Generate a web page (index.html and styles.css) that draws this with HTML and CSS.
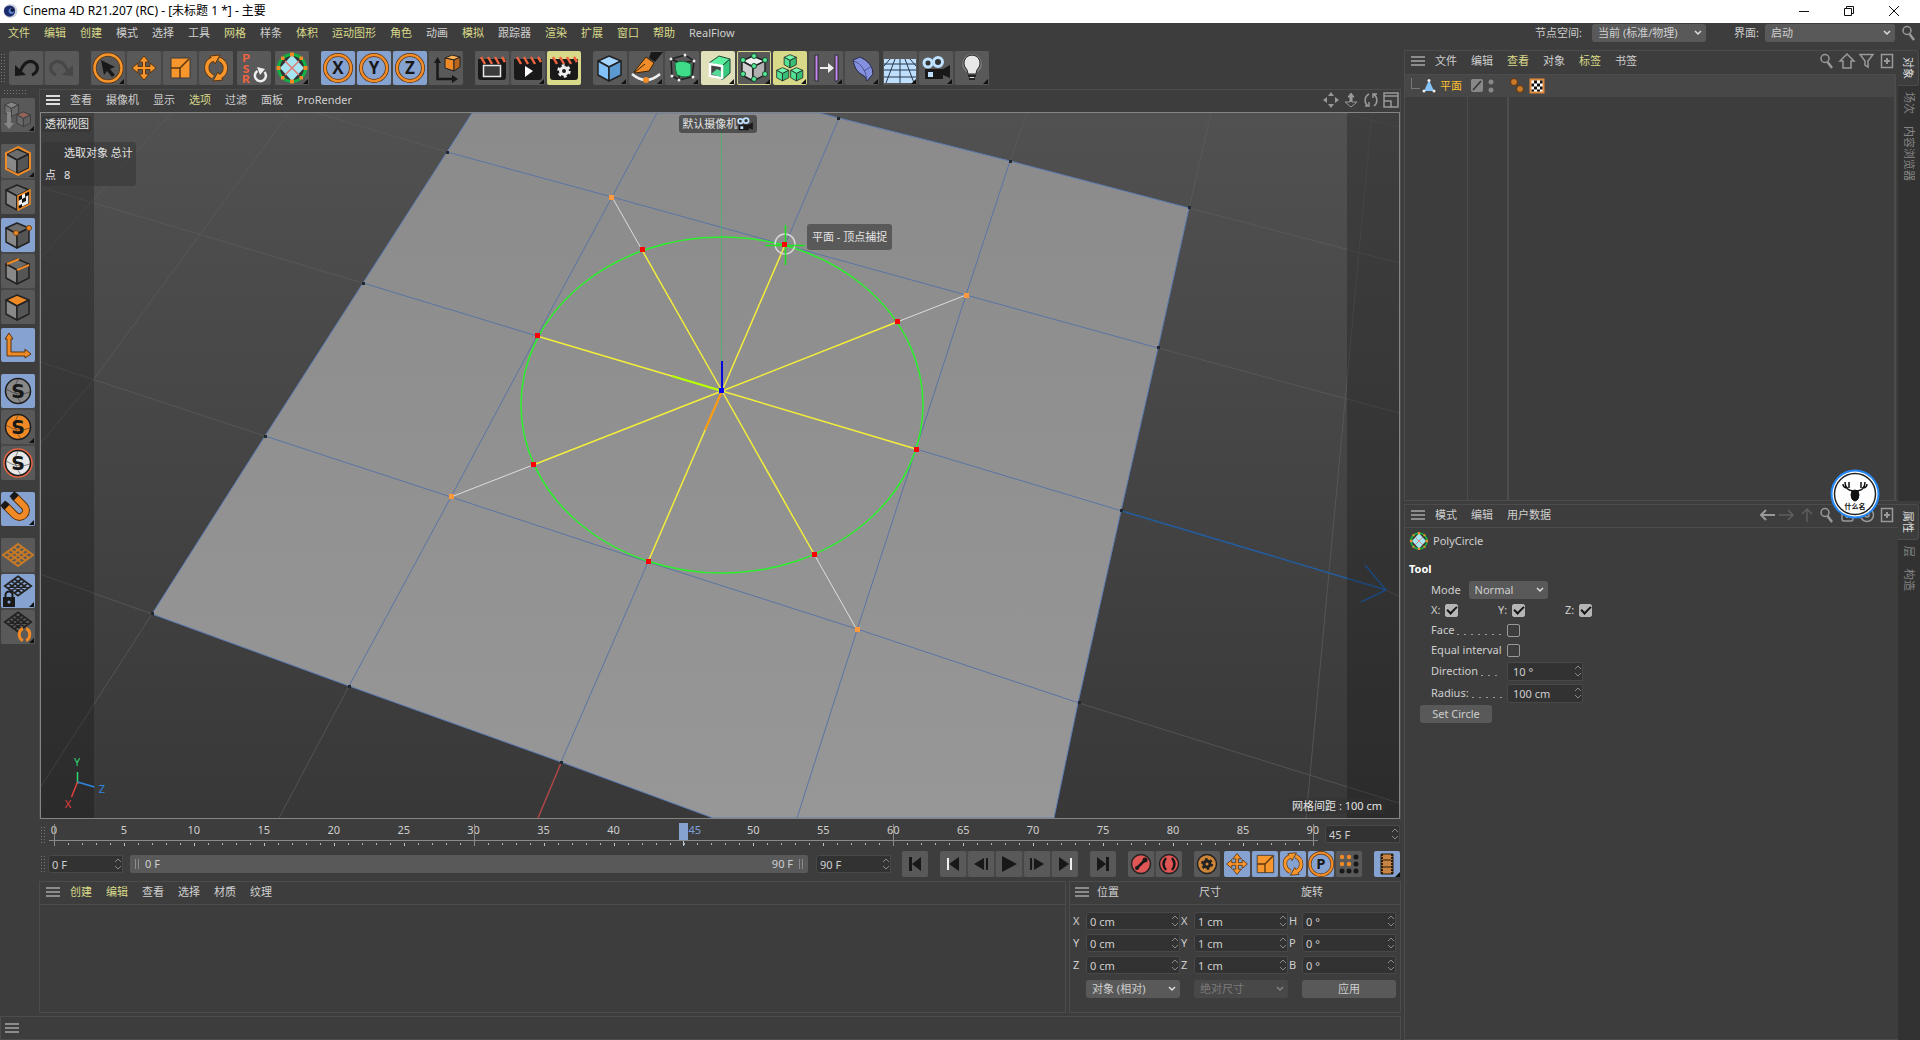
FILE: index.html
```html
<!DOCTYPE html>
<html lang="zh-CN">
<head>
<meta charset="utf-8">
<title>Cinema 4D R21.207 (RC) - [未标题 1 *] - 主要</title>
<link rel="stylesheet" href="styles.css">
</head>
<body>
<svg class="sprite" aria-hidden="true">
  <symbol id="burger" viewBox="0 0 14 10"><path d="M0 1h14M0 5h14M0 9h14" stroke="currentColor" stroke-width="2"/></symbol>
  <symbol id="search" viewBox="0 0 16 16"><circle cx="6" cy="5.500" r="4" fill="none" stroke="currentColor" stroke-width="1.500"/><path d="M8.500 9l4.500 6" stroke="currentColor" stroke-width="2.500"/></symbol>
  <symbol id="plusbox" viewBox="0 0 16 16"><path d="M2.500 1.500h11v13h-11z" fill="none" stroke="currentColor" stroke-width="1.500"/><path d="M8 5v6M5 8h6" stroke="currentColor" stroke-width="2"/></symbol>
  <symbol id="undo" viewBox="0 0 34 34"><path d="M11 21C15 10 22 8 27 13c3 4 1 9-4 11" fill="none" stroke="currentColor" stroke-width="3"/><path d="M6 14v11l11-1z" fill="currentColor"/></symbol>
  <symbol id="move" viewBox="0 0 34 34"><path d="M17 5l5 6h-3.500v4.500H23V12l6 5-6 5v-3.500h-4.500V23H22l-5 6-5-6h3.500v-4.500H11V22l-6-5 6-5v3.500h4.500V11H12z" fill="#f7962d" stroke="#5a3510"/></symbol>
  <symbol id="scale" viewBox="0 0 34 34"><path d="M8 7h19v20H8z" fill="#f7962d" stroke="#3a3a3a"/><path d="M8 17h9v10M17 17l9-9" fill="none" stroke="#5a3510" stroke-width="1.500"/></symbol>
  <symbol id="rotate" viewBox="0 0 34 34"><g fill="none" stroke="#5a3510" stroke-width="5"><path d="M14 26C5 21 6 10 15 8M20 8c9 4 8 15 0 18"/></g><path d="M11 5l10-1-5 9zM24 29l-10 1 5-9z" fill="#f7962d" stroke="#5a3510"/><g fill="none" stroke="#f7962d" stroke-width="3.500"><path d="M14 26C5 21 6 10 15 8M20 8c9 4 8 15 0 18"/></g></symbol>
  <symbol id="brackets" viewBox="0 0 34 34"><path d="M14 5C4 9 4 25 14 29M20 5c10 4 10 20 0 24" fill="none" stroke="#f08a26" stroke-width="6"/></symbol>
  <symbol id="poly" viewBox="0 0 34 34"><circle cx="17" cy="17" r="13.500" fill="#333" stroke="#11b044" stroke-width="3"/><path d="M17 4l12 13-12 13L5 17z" fill="#a5e6f0"/><path d="M10 10l14 14M24 10L10 24" stroke="#e07c78" stroke-width="1.500"/><g fill="#ef8a26"><path d="M15 1.500h4v4h-4zM15 28.500h4v4h-4zM1.500 15h4v4h-4zM28.500 15h4v4h-4zM6 5.500h3.500V9H6zM24.500 5.500H28V9h-3.500zM6 25h3.500v3.500H6zM24.500 25H28v3.500h-3.500z"/></g></symbol>
  <symbol id="ring" viewBox="0 0 34 34"><circle cx="17" cy="17" r="13" fill="none" stroke="#5a3510" stroke-width="4"/><circle cx="17" cy="17" r="13" fill="none" stroke="#f08c2a" stroke-width="2.500"/></symbol>
  <symbol id="clap" viewBox="0 0 34 34"><path d="M3 8h28v18q0 3-3 3H6q-3 0-3-3z" fill="#191919"/><path d="M6 6l4 7M13 6l4 7M20 6l4 7M27 6l3 5" stroke="#ee6440" stroke-width="2.500"/></symbol>
  <symbol id="cube" viewBox="0 0 34 34"><g stroke="#222" stroke-width="1.500" stroke-linejoin="round"><path d="M16 5l12 5-12 6-11-6z" fill="var(--a)"/><path d="M5 10l11 6v14L5 24z" fill="var(--b)"/><path d="M28 10l-12 6v14l12-6z" fill="var(--c)"/></g></symbol>
  <symbol id="cam" viewBox="0 0 34 34"><path d="M6 18h18l7-4v13l-7-3v4H6z" fill="#191919"/><circle cx="9" cy="12" r="4" fill="#333" stroke="#bfe0ff" stroke-width="3"/><circle cx="19" cy="11" r="4.500" fill="#333" stroke="#bfe0ff" stroke-width="3"/><path d="M9 21h5v5H9z" fill="#bfe0ff"/></symbol>
  <symbol id="grid" viewBox="0 0 34 34"><path d="M17 6l15 11-15 11L2 17zM13 9l15 11M9.500 11.500l15 11M6 14l15 11M21 9L6 20M24.500 11.500l-15 11M28 14L13 25" fill="none" stroke="currentColor" stroke-width="2"/></symbol>
  <symbol id="snap" viewBox="0 0 34 34"><circle cx="17" cy="17" r="12.500" fill="var(--a)" stroke="#1d1d1d" stroke-width="1.500"/><path d="M5 15q12 8 24 3M17 5q-7 12 3 24" fill="none" stroke="#222" opacity=".5"/></symbol>
  <symbol id="corner" viewBox="0 0 34 34"><path d="M33 28v5h-5z" fill="#111"/></symbol>
</svg>

<header class="titlebar">
  <svg class="app-logo" viewBox="0 0 16 16"><circle cx="8" cy="8" r="7.500" fill="#cfd3de"/><circle cx="7" cy="8" r="6" fill="#1a2c6e"/><circle cx="9" cy="8" r="3" fill="#5d84cf"/><circle cx="10" cy="7" r="2" fill="#10183c"/></svg>
  <h1>Cinema 4D R21.207 (RC) - [未标题 1 *] - 主要</h1>
  <div class="win-buttons">
    <button aria-label="最小化"><svg viewBox="0 0 12 12"><path d="M1 6.500h10" stroke="#111"/></svg></button>
    <button aria-label="还原"><svg viewBox="0 0 12 12"><path d="M1.500 3.500h7v7h-7zM3.500 3V1.500h7v7H9" fill="none" stroke="#111"/></svg></button>
    <button aria-label="关闭"><svg viewBox="0 0 12 12"><path d="M1 1l10 10M11 1L1 11" stroke="#111"/></svg></button>
  </div>
</header>

<nav class="menubar">
  <div class="menu">
    <button class="hot">文件</button><button class="hot">编辑</button><button class="hot">创建</button><button>模式</button><button>选择</button><button>工具</button><button class="hot">网格</button><button>样条</button><button class="hot">体积</button><button class="hot">运动图形</button><button class="hot">角色</button><button>动画</button><button class="hot">模拟</button><button>跟踪器</button><button class="hot">渲染</button><button class="hot">扩展</button><button class="hot">窗口</button><button class="hot">帮助</button><button>RealFlow</button>
  </div>
  <div class="menubar-right">
    <label for="nodespace">节点空间:</label>
    <select id="nodespace" class="w-node"><option>当前 (标准/物理)</option></select>
    <label for="layout" class="layout-label">界面:</label>
    <select id="layout" class="w-layout"><option>启动</option></select>
    <svg class="ic16"><use href="#search"/></svg>
  </div>
</nav>

<div class="workspace">
<main class="main">
  <div class="toolbar">
    <div class="grip grip-v"></div>
    <div class="group"><button class="tool" aria-label="撤销"><svg style="color:#181818"><use href="#undo"/></svg></button><button class="tool" aria-label="重做"><svg class="flip" style="color:#474747"><use href="#undo"/></svg></button></div>
    <div class="group sep"><button class="tool" aria-label="选择"><svg viewBox="0 0 34 34"><circle cx="17" cy="17" r="13.500" fill="none" stroke="#5a3510" stroke-width="4"/><circle cx="17" cy="17" r="13.500" fill="none" stroke="#f7962d" stroke-width="2.500"/><path d="M10 9l14 7-5 2 5 6-3 2-5-6-3 4z" fill="#191919"/><use href="#corner"/></svg></button><button class="tool" aria-label="移动"><svg><use href="#move"/></svg></button><button class="tool" aria-label="缩放"><svg><use href="#scale"/></svg></button><button class="tool" aria-label="旋转"><svg><use href="#rotate"/></svg></button></div>
    <div class="group near"><button class="tool" aria-label="重置 PSR"><svg viewBox="0 0 34 34"><text class="psr" x="9" y="11">P</text><text class="psr" x="9" y="21.500">S</text><text class="psr" x="9" y="32">R</text><path d="M20.500 20a5.500 5.500 0 1 0 7 1" fill="none" stroke="#eee" stroke-width="2.500"/><path d="M20 16l8 2-5 6z" fill="#eee"/></svg></button></div>
    <div class="group near"><button class="tool" aria-label="PolyCircle"><svg viewBox="0 0 34 34"><use href="#poly"/><use href="#corner"/></svg></button></div>
    <div class="group sep"><button class="tool on" aria-label="X 轴"><svg viewBox="0 0 34 34"><use href="#ring"/><text class="axis" x="17" y="23">X</text></svg></button><button class="tool on" aria-label="Y 轴"><svg viewBox="0 0 34 34"><use href="#ring"/><text class="axis" x="17" y="23">Y</text></svg></button><button class="tool on" aria-label="Z 轴"><svg viewBox="0 0 34 34"><use href="#ring"/><text class="axis" x="17" y="23">Z</text></svg></button><button class="tool" aria-label="坐标系统"><svg viewBox="0 0 34 34"><path d="M8.500 11v17H25" fill="none" stroke="#191919" stroke-width="2.500"/><path d="M5 12l3.500-6 3.500 6zM23 24l6 4-6 4z" fill="#191919"/><g stroke="#222" stroke-linejoin="round"><path d="M16 7l7-3 8 2-6 3z" fill="#ffb055"/><path d="M16 7l9 2v11l-9-3z" fill="#f08a26"/><path d="M25 9l6-3v10l-6 4z" fill="#b9661c"/></g></svg></button></div>
    <div class="group sep"><button class="tool" aria-label="渲染视图"><svg viewBox="0 0 34 34"><use href="#clap"/><path d="M8.500 14.500h17v11h-17z" fill="#3b3b3b" stroke="#e8e8e8" stroke-width="1.500"/></svg></button><button class="tool" aria-label="渲染"><svg viewBox="0 0 34 34"><use href="#clap"/><path d="M14 15l8 5-8 6z" fill="#fff"/><use href="#corner"/></svg></button><button class="tool hl" aria-label="渲染设置"><svg viewBox="0 0 34 34"><use href="#clap"/><circle cx="17" cy="20" r="3.500" fill="none" stroke="#eee" stroke-width="3"/><circle cx="17" cy="20" r="5.500" fill="none" stroke="#eee" stroke-width="2.500" stroke-dasharray="2.900 2.860"/></svg></button></div>
    <div class="group sep"><button class="tool" aria-label="立方体"><svg viewBox="0 0 34 34" style="--a:#a4d6ff;--b:#82c0f8;--c:#5b9ad0"><use href="#cube"/><use href="#corner"/></svg></button><button class="tool" aria-label="样条画笔"><svg viewBox="0 0 34 34"><path d="M22 1h12L26 11l-6-4z" fill="#191919"/><path d="M17 6l8 6-5 8-14 2-1-1z" fill="#f08c2a" stroke="#3a2408"/><path d="M6 21l10-8" stroke="#3a2408"/><path d="M3 23q14 12 28 0" fill="none" stroke="#eee" stroke-width="2.500"/><circle cx="17" cy="29" r="3" fill="#f08c2a"/><use href="#corner"/></svg></button><button class="tool" aria-label="细分曲面"><svg viewBox="0 0 34 34"><path d="M6 8l14-4 9 6-2 16-13 3-7-4zM6 8l9 4 14-2M15 12l-1 17" fill="none" stroke="#1e1e1e" stroke-width="1.500"/><path d="M10 12q7-4 16 1v11q-5 4-14 0-2-5-2-12z" fill="#3fdc8a" stroke="#146c3d"/><g fill="#eee"><circle cx="6" cy="8" r="1.500"/><circle cx="20" cy="4" r="1.500"/><circle cx="29" cy="10" r="1.500"/><circle cx="28" cy="26" r="1.500"/><circle cx="14" cy="29" r="1.500"/><circle cx="7" cy="25" r="1.500"/></g><use href="#corner"/></svg></button><button class="tool pale" aria-label="挤压"><svg viewBox="0 0 34 34"><g stroke="#1b4a31" stroke-linejoin="round"><path d="M8 12l10-7 11 3-8 7z" fill="#5cf0a0"/><path d="M21 15l8-7v14l-8 7z" fill="#39c87f"/></g><path d="M9 13l12 2v12l-12-2z" fill="#444" stroke="#fff" stroke-width="2.500"/><path d="M10 23l6-5 4 2v6z" fill="#56d896"/><use href="#corner"/></svg></button><button class="tool framed" aria-label="晶格"><svg viewBox="0 0 34 34"><g style="--a:#eee;--b:#cfcfcf;--c:#b0b0b0"><use href="#cube"/></g><g fill="#57e898" stroke="#17492d"><circle cx="17" cy="5" r="2.500"/><circle cx="6" cy="9" r="2.500"/><circle cx="28" cy="9" r="2.500"/><circle cx="17" cy="15" r="2.500"/><circle cx="6" cy="23" r="2.500"/><circle cx="28" cy="23" r="2.500"/><circle cx="17" cy="28" r="2.500"/></g><use href="#corner"/></svg></button><button class="tool hl" aria-label="克隆"><svg viewBox="0 0 34 34" style="--a:#6df5ac;--b:#52e296;--c:#36bd76"><use href="#cube" x="8" y="1" width="19" height="18"/><use href="#cube" x="1" y="14" width="18" height="18"/><use href="#cube" x="15" y="14" width="18" height="18"/><use href="#corner"/></svg></button><button class="tool" aria-label="场"><svg viewBox="0 0 34 34"><path d="M6 4h3v26H6zM26 4h3v26h-3z" fill="#c486f5" stroke="#2c2c2c"/><path d="M11 16h8v-4l6 5-6 5v-4h-8z" fill="#eee"/><use href="#corner"/></svg></button><button class="tool" aria-label="变形器"><svg viewBox="0 0 34 34"><path d="M8 9l7-3q13 6 13 17l-6 7q-1-5-6-7-6-3-8-14z" fill="#8591de" stroke="#262a4a"/><path d="M9 10q11 4 13 19M19 20l8-5" fill="none" stroke="#4c5596"/><use href="#corner"/></svg></button></div>
    <div class="group near"><button class="tool" aria-label="地面"><svg viewBox="0 0 34 34"><path d="M1 8h32v24H1z" fill="#bfdfff"/><path d="M1 13h32M1 19h32M1 26h32M17 8v24M12 8L3 32M22 8l9 24M7 8L1 15M27 8l6 7" stroke="#27394b" stroke-width="1"/><use href="#corner"/></svg></button><button class="tool" aria-label="摄像机"><svg viewBox="0 0 34 34"><use href="#cam"/><use href="#corner"/></svg></button><button class="tool" aria-label="灯光"><svg viewBox="0 0 34 34"><circle cx="17" cy="13" r="10" fill="#999" opacity=".5"/><path d="M13 23q0-4-3-7a8 8 0 1 1 14 0q-3 3-3 7z" fill="#e8e8e8" stroke="#2b2b2b"/><path d="M13 25h8M14 28h6" stroke="#222" stroke-width="2"/><path d="M15 26.500h4" stroke="#ddd"/><use href="#corner"/></svg></button></div>
  </div>

  <div class="stage">
    <aside class="sidebar">
      <div class="grip grip-h"></div>
      <div class="vgroup"><button class="tool" aria-label="转为可编辑"><svg viewBox="0 0 34 34"><g opacity=".55"><g style="--a:#aaa;--b:#888;--c:#777"><use href="#cube" x="1" y="1" width="20" height="20"/></g><g style="--a:#c4705a;--b:#777;--c:#666"><use href="#cube" x="13" y="11" width="20" height="20"/></g><path d="M6 14h4v11h3l-5 6-5-6h3z" fill="#aaa"/></g><use href="#corner"/></svg></button></div>
      <div class="vgroup far"><button class="tool" aria-label="模型"><svg viewBox="0 0 34 34" style="--a:#6c6c6c;--b:#888;--c:#555"><use href="#cube"/><path d="M17 3l12 6v16l-12 6-12-6V9z" fill="none" stroke="#f08a26" stroke-width="2"/><use href="#corner"/></svg></button><button class="tool" aria-label="纹理"><svg viewBox="0 0 34 34" style="--a:#6c6c6c;--b:#888;--c:#eee"><use href="#cube"/><path d="M17 16l4-2v5l-4 2zM24 13l4-2v4l-4 2zM21 19l4-2v4l-4 2zM17 26l4-2v4l-4 1z" fill="#111"/><path d="M17 16l12-6v14l-12 6z" fill="none" stroke="#f08a26" stroke-width="1.500"/></svg></button></div>
      <div class="vgroup"><button class="tool on" aria-label="点"><svg viewBox="0 0 34 34" style="--a:#6c6c6c;--b:#888;--c:#555"><use href="#cube"/><g fill="#f08a26" stroke="#7a4410"><circle cx="15" cy="15" r="2.500"/><circle cx="28" cy="10" r="2.500"/></g></svg></button><button class="tool" aria-label="边"><svg viewBox="0 0 34 34" style="--a:#6c6c6c;--b:#888;--c:#555"><use href="#cube"/><path d="M6 10l12-5M16 16l12-5" stroke="#f08a26" stroke-width="2"/></svg></button><button class="tool" aria-label="多边形"><svg viewBox="0 0 34 34" style="--a:#f08a26;--b:#888;--c:#555"><use href="#cube"/></svg></button></div>
      <div class="vgroup"><button class="tool on" aria-label="启用轴心"><svg viewBox="0 0 34 34"><path d="M8 5l4 6h-2v13h14v-3l6 5-6 4v-2H6V11H4z" fill="#f08a26" stroke="#5a3510"/></svg></button></div>
      <div class="vgroup far"><button class="tool on" aria-label="视窗独显关闭"><svg viewBox="0 0 34 34" style="--a:#888"><use href="#snap"/><text class="solo" x="17" y="24">S</text></svg></button><button class="tool" aria-label="视窗独显单一"><svg viewBox="0 0 34 34" style="--a:#f08a26"><use href="#snap"/><text class="solo" x="17" y="24">S</text><use href="#corner"/></svg></button><button class="tool" aria-label="视窗独显层级"><svg viewBox="0 0 34 34" style="--a:#e8e8e8"><circle cx="17" cy="17" r="14" fill="none" stroke="#ee6440" stroke-width="1.500"/><use href="#snap"/><text class="solo" x="17" y="24">S</text></svg></button></div>
      <div class="vgroup far"><button class="tool on" aria-label="启用捕捉"><svg viewBox="0 0 34 34"><g transform="rotate(-45 17 17)"><path d="M7 5v14a10 10 0 0 0 20 0V5h-7v14a3 3 0 0 1-6 0V5z" fill="#f08a26" stroke="#5a3510"/><path d="M7 2h7v6H7zM20 2h7v6h-7z" fill="#191919"/></g><use href="#corner"/></svg></button></div>
      <div class="vgroup far"><button class="tool" aria-label="工作平面"><svg style="color:#c97a24"><use href="#grid"/></svg></button><button class="tool on" aria-label="锁定工作平面"><svg viewBox="0 0 34 34" style="color:#222"><use href="#grid" x="2" y="-3" width="30" height="30"/><path d="M2 23h12v10H2z" fill="#191919"/><path d="M4.500 23v-2a3.500 3.500 0 0 1 7 0v2" fill="none" stroke="#191919" stroke-width="2"/><circle cx="8" cy="28" r="1.500" fill="#86a2d0"/><use href="#corner"/></svg></button><button class="tool" aria-label="平直工作平面"><svg viewBox="0 0 34 34" style="color:#222"><use href="#grid" x="2" y="-3" width="30" height="30"/><use href="#brackets" x="15" y="16" width="17" height="17"/><use href="#corner"/></svg></button></div>
    </aside>

    <div class="center">
      <section class="view">
        <div class="panel-head">
          <svg class="burger light"><use href="#burger"/></svg>
          <div class="menu"><button>查看</button><button>摄像机</button><button>显示</button><button class="hot">选项</button><button>过滤</button><button>面板</button><button>ProRender</button></div>
          <div class="head-icons">
            <svg class="ic16" viewBox="0 0 16 16"><path d="M8 0l3 4H5zM8 16l3-4H5zM0 8l4-3v6zM16 8l-4-3v6zM6 8h4M8 6v4" fill="#999"/></svg>
            <svg class="ic16" viewBox="0 0 16 16"><path d="M8 1l3 4H9v5h5l-6 5-6-5h5V5H5z" fill="#3d3d3d" stroke="#999"/><path d="M8 1l3 4H9v5H7V5H5z" fill="#999"/></svg>
            <svg class="ic16" viewBox="0 0 16 16"><path d="M6 2C1 5 1 11 5 14M10 2c5 3 5 9 1 12M2 14h4v-4M14 2h-4v4" fill="none" stroke="#999" stroke-width="1.500"/></svg>
            <svg class="ic16" viewBox="0 0 16 16"><path d="M1 1h14v14H1zM1 4h14M1 9h7v6" fill="none" stroke="#999" stroke-width="1.500"/></svg>
          </div>
        </div>
        <div class="viewport">
          <svg class="scene" viewBox="41 113 1358 705" preserveAspectRatio="xMidYMid slice">
            <defs>
              <linearGradient id="bg" x1="0" y1="0" x2="0" y2="1"><stop offset="0" stop-color="#515151"/><stop offset="1" stop-color="#383838"/></linearGradient>
              <linearGradient id="pl" x1="0" y1="0" x2="0" y2="1"><stop offset="0" stop-color="#8b8b8b"/><stop offset="1" stop-color="#979797"/></linearGradient>
            </defs>
            <path d="M41 113h1358v705H41z" fill="url(#bg)"/>
            <g fill="none" stroke="#5c5c5c">
              <path d="M40 187l323 96M40 362l225 74M40 574l112 40L40 788M300 108l147 44M349 686l-70 132M289 113L94 379 40 444M171 113L40 259M1010 161l17-48M1189 208l22-95M1189 208l210 55M1158 348l241 65M1386 590l13 6M1079 703l320 100M1372 113l-66 705M1342 113l57 14" opacity=".75"/>
            </g>
            <path d="M472 113h348l19 5 171 43 179 47-31 140-37 163-43 192-24 115H713L561 762 349 686 152 614 265 436l98-153 84-131z" fill="url(#pl)" stroke="#5b7db4" stroke-width="1"/>
            <g fill="none" stroke="#5a74a5">
              <path d="M447 152l165 45 173 48 181 50 192 53M363 283l174 53M916 449l206 62M265 436l186 61 197 65 209 67 222 74"/>
              <path d="M657 113l-45 84-75 139-86 161-102 189M839 118l-54 127M648 562l-87 200M1010 161l-44 134-50 154-59 181-60 188"/>
            </g>
            <path d="M1122 511l264 79M1365 565l21 25-25 12" fill="none" stroke="#245c9e" stroke-width="1.500"/>
            <path d="M561 763l-23 55" stroke="#b04646" stroke-width="1.500"/>
            <path d="M721.500 113v278" stroke="#41b865" opacity=".7"/>
            <g stroke="#dedede"><path d="M612 197l30 53M966 295l-69 27M451 497l82-32M857 630l-43-76"/></g>
            <ellipse cx="722" cy="405" rx="201" ry="168" fill="none" stroke="#2bf02b" stroke-width="1.500"/>
            <path d="M722 391L642 250M722 391l63-146M722 391l175-69M722 391l194 58M722 391l92 163M722 391l-74 171M722 391l-189 74M722 391l-185-55" stroke="#f4ee3a" stroke-width="1.500"/>
            <path d="M722 391l-50-15" stroke="#b4ff00" stroke-width="2"/>
            <path d="M722 391l-17 39" stroke="#ff9a10" stroke-width="2"/>
            <path d="M722 391v-30" stroke="#0a0ad8" stroke-width="2"/>
            <path d="M719 388h5v5h-5z" fill="#0000ff"/>
            <circle cx="785" cy="244" r="10" fill="none" stroke="#d8d8d8" stroke-width="1.500"/>
            <path d="M765 245.500h40M785.500 225v40" stroke="#1fe41f" stroke-width="1.500"/>
            <path d="M640 247h5v5h-5zM782 242h5v5h-5zM895 319h5v5h-5zM914 447h5v5h-5zM812 552h5v5h-5zM646 559h5v5h-5zM531 462h5v5h-5zM535 333h5v5h-5z" fill="#ff0000"/>
            <path d="M609 195h5v5h-5zM964 293h5v5h-5zM449 494h5v5h-5zM855 627h5v5h-5z" fill="#ff9a3c"/>
            <path d="M446 151h3v3h-3zM362 282h3v3h-3zM264 435h3v3h-3zM151 612h3v3h-3zM348 685h3v3h-3zM560 761h3v3h-3zM837 117h3v3h-3zM1009 160h3v3h-3zM1188 206h3v3h-3zM1157 346h3v3h-3zM1120 509h3v3h-3zM1078 701h3v3h-3z" fill="#222831"/>
            <path d="M41 113h53v705H41zM1347 113h52v705h-52z" fill="#000" opacity=".22"/>
            <path d="M77.500 784v-12" stroke="#2fd673" stroke-width="1.500"/><path d="M77.500 782l17 5" stroke="#2e86e0" stroke-width="1.500"/><path d="M77.500 782l-6 15" stroke="#e04040" stroke-width="1.500"/>
            <text class="axlabel" x="77" y="766" fill="#2fd673">Y</text><text class="axlabel" x="102" y="793" fill="#2e86e0">Z</text><text class="axlabel" x="68" y="808" fill="#e04040">X</text>
          </svg>
          <span class="hud hud-name">透视视图</span>
          <table class="hud hud-stats"><tr><th></th><td>选取对象 总计</td></tr><tr><th>点</th><td>8</td></tr></table>
          <span class="hud hud-cam">默认摄像机<svg viewBox="3 5 30 24"><use href="#cam" width="34" height="34"/></svg></span>
          <span class="hud hud-tip">平面 - 顶点捕捉</span>
          <span class="hud hud-grid">网格间距 : 100 cm</span>
        </div>
      </section>

      <div class="timeline">
        <div class="grip grip-v small"></div>
        <div class="ruler">
          <div class="labels"><span>0</span><span>5</span><span>10</span><span>15</span><span>20</span><span>25</span><span>30</span><span>35</span><span>40</span><span class="current">45</span><span>50</span><span>55</span><span>60</span><span>65</span><span>70</span><span>75</span><span>80</span><span>85</span><span>90</span></div>
          <div class="ticks"></div>
          <div class="marks"><i></i><i></i><i></i><i></i></div>
          <div class="playhead"></div>
        </div>
        <input class="num w-frame" aria-label="当前帧" value="45 F">
      </div>

      <div class="transport">
        <div class="grip grip-v small"></div>
        <input class="num w-frame" aria-label="起始帧" value="0 F">
        <div class="range"><i></i><span>0 F</span><span class="end">90 F</span><i></i></div>
        <input class="num w-frame" aria-label="结束帧" value="90 F">
        <div class="tgroup t1"><button class="tb" aria-label="转到开始"><svg viewBox="0 0 26 26"><path d="M7 6h3v14H7zM19 6v14l-9-7z" fill="#181818"/></svg></button></div>
        <div class="tgroup t2"><button class="tb" aria-label="上一关键帧"><svg viewBox="0 0 26 26"><path d="M7 7h2v12H7z" fill="#eee"/><path d="M9 13l10-7v14z" fill="#181818"/></svg></button><button class="tb" aria-label="上一帧"><svg viewBox="0 0 26 26"><path d="M6 13l10-6v12zM18 7h2v12h-2z" fill="#181818"/></svg></button><button class="tb" aria-label="播放"><svg viewBox="0 0 26 26"><path d="M6 5l15 8-15 8z" fill="#181818"/></svg></button><button class="tb" aria-label="下一帧"><svg viewBox="0 0 26 26"><path d="M20 13L10 7v12zM6 7h2v12H6z" fill="#181818"/></svg></button><button class="tb" aria-label="下一关键帧"><svg viewBox="0 0 26 26"><path d="M17 13L7 6v14z" fill="#181818"/><path d="M18 7h2v12h-2z" fill="#eee"/></svg></button></div>
        <div class="tgroup t2"><button class="tb" aria-label="转到结束"><svg viewBox="0 0 26 26"><path d="M16 6h3v14h-3zM7 6v14l9-7z" fill="#181818"/></svg></button></div>
        <div class="tgroup t2"><button class="tb" aria-label="记录关键帧"><svg viewBox="0 0 26 26"><circle cx="13" cy="13" r="9.500" fill="#e25555" stroke="#222" stroke-width="1.500"/><path d="M9 17l8-8" stroke="#181818" stroke-width="2.500"/><circle cx="17" cy="9" r="2.500" fill="#181818"/><circle cx="9" cy="17" r="2" fill="#181818"/></svg></button><button class="tb" aria-label="自动关键帧"><svg viewBox="0 0 26 26"><circle cx="13" cy="13" r="9.500" fill="#e25555" stroke="#222" stroke-width="1.500"/><path d="M10 7q-5 6 0 12M16 7q5 6 0 12" fill="none" stroke="#181818" stroke-width="2.500"/></svg></button></div>
        <div class="tgroup t2"><button class="tb" aria-label="关键帧选集"><svg viewBox="0 0 26 26"><circle cx="13" cy="13" r="9.500" fill="#d08638" stroke="#222" stroke-width="1.500"/><circle cx="13" cy="13" r="3" fill="none" stroke="#222" stroke-width="3"/><circle cx="13" cy="13" r="5" fill="none" stroke="#222" stroke-width="2" stroke-dasharray="2.600 2.630"/></svg></button></div>
        <div class="tgroup t3"><button class="tb on" aria-label="位置"><svg viewBox="2 2 30 30"><use href="#move" width="34" height="34"/></svg></button><button class="tb on" aria-label="缩放"><svg viewBox="2 2 30 30"><use href="#scale" width="34" height="34"/></svg></button><button class="tb on" aria-label="旋转"><svg viewBox="2 2 30 30"><use href="#rotate" width="34" height="34"/></svg></button><button class="tb on" aria-label="参数"><svg viewBox="2 2 30 30"><use href="#ring" width="34" height="34"/><text class="axis" x="17" y="23">P</text></svg></button><button class="tb" aria-label="点级别动画"><svg viewBox="0 0 26 26"><g fill="#f08a26"><circle cx="6" cy="6" r="2.200"/><circle cx="13" cy="6" r="2.200"/><circle cx="6" cy="13" r="2.200"/><circle cx="13" cy="13" r="2.200"/></g><g fill="#181818"><circle cx="20" cy="6" r="2.500"/><circle cx="20" cy="13" r="2.500"/><circle cx="6" cy="20" r="2.500"/><circle cx="13" cy="20" r="2.500"/><circle cx="20" cy="20" r="2.500"/></g></svg></button></div>
        <div class="tgroup t2"><button class="tb on" aria-label="时间线"><svg viewBox="0 0 26 26"><path d="M7 3h12v20H7z" fill="#c98443" stroke="#2a1a08"/><path d="M8 3v20M18 3v20" stroke="#2a1a08" stroke-width="2" stroke-dasharray="2 1"/><path d="M9 9h8M9 16h8" stroke="#2a1a08"/><path d="M26 21v5h-5z" fill="#111"/></svg></button></div>
      </div>

      <div class="lower">
        <section class="materials">
          <div class="panel-head short"><svg class="burger"><use href="#burger"/></svg><div class="menu"><button class="hot">创建</button><button class="hot">编辑</button><button>查看</button><button>选择</button><button>材质</button><button>纹理</button></div></div>
        </section>
        <section class="coords">
          <div class="panel-head short"><svg class="burger"><use href="#burger"/></svg><div class="coord-titles"><span>位置</span><span>尺寸</span><span>旋转</span></div></div>
          <div class="coord-grid">
            <label for="px">X</label><input class="num" id="px" value="0 cm"><label for="sx">X</label><input class="num" id="sx" value="1 cm"><label for="rh">H</label><input class="num" id="rh" value="0 °">
            <label for="py">Y</label><input class="num" id="py" value="0 cm"><label for="sy">Y</label><input class="num" id="sy" value="1 cm"><label for="rp">P</label><input class="num" id="rp" value="0 °">
            <label for="pz">Z</label><input class="num" id="pz" value="0 cm"><label for="sz">Z</label><input class="num" id="sz" value="1 cm"><label for="rb">B</label><input class="num" id="rb" value="0 °">
            <select class="c2" aria-label="坐标模式"><option>对象 (相对)</option></select><select class="c4" aria-label="尺寸模式" disabled><option>绝对尺寸</option></select><button class="btn c6">应用</button>
          </div>
        </section>
      </div>
    </div>
  </div>
  <footer class="status"><svg class="burger"><use href="#burger"/></svg></footer>
</main>

<aside class="right">
  <div class="dock objects-dock">
    <section class="panel">
      <div class="panel-head"><svg class="burger"><use href="#burger"/></svg><div class="menu"><button>文件</button><button>编辑</button><button class="hot">查看</button><button>对象</button><button class="hot">标签</button><button>书签</button></div>
        <div class="head-icons"><svg class="ic16"><use href="#search"/></svg><svg class="ic16" viewBox="0 0 16 16"><path d="M8 1l7 7h-3v7H4V8H1z" fill="none" stroke="#999" stroke-width="1.500"/></svg><svg class="ic16" viewBox="0 0 16 16"><path d="M1 1.500h13L9 8v6l-3-2V8z" fill="none" stroke="#999" stroke-width="1.500"/></svg><svg class="ic16"><use href="#plusbox"/></svg></div></div>
      <div class="tree">
        <div class="tree-row">
          <div class="tree-name"><i class="branch"></i><svg class="ic16" viewBox="0 0 16 16"><path d="M8 2l5 11H3z" fill="#86c4fa"/><g fill="#eee"><circle cx="8" cy="2.500" r="1.500"/><circle cx="3" cy="13" r="1.500"/><circle cx="13" cy="13" r="1.500"/></g></svg><span>平面</span></div>
          <div class="tree-flags"><svg viewBox="0 0 24 14"><rect width="12" height="13" rx="2" fill="#888"/><path d="M2 11l8-9" stroke="#333" stroke-width="1.500"/><circle cx="20" cy="3" r="2.500" fill="#888"/><circle cx="20" cy="11" r="2.500" fill="#888"/></svg></div>
          <div class="tree-tags"><svg viewBox="0 0 36 18"><circle cx="5" cy="5" r="3.500" fill="#c9792a" stroke="#5c330e"/><circle cx="11" cy="12" r="3.500" fill="#c9792a" stroke="#5c330e"/><path d="M21.500 2.500h13v13h-13z" fill="#fff" stroke="#e08a3c" stroke-width="2"/><path d="M25 3.500h3v3h-3zM31 3.500h2.500v3H31zM22.500 6.500H25v3h-2.500zM28 6.500h3v3h-3zM25 9.500h3v3h-3zM31 9.500h2.500v3H31zM22.500 12.500H25v2h-2.500zM28 12.500h3v2h-3z" fill="#111"/></svg></div>
        </div>
        <div class="tree-body"><div></div><div></div><div></div></div>
      </div>
    </section>
    <nav class="tabs"><button class="active">对象</button><button>场次</button><button>内容浏览器</button></nav>
  </div>
  <div class="dock attr-dock">
    <section class="panel">
      <div class="panel-head short"><svg class="burger"><use href="#burger"/></svg><div class="menu"><button>模式</button><button>编辑</button><button>用户数据</button></div>
        <div class="head-icons"><svg class="ic16" viewBox="0 0 16 16"><path d="M16 8H2M7 3L2 8l5 5" fill="none" stroke="#999" stroke-width="2"/></svg><svg class="ic16" viewBox="0 0 16 16"><path d="M0 8h14M9 3l5 5-5 5" fill="none" stroke="#5e5e5e" stroke-width="1.500"/></svg><svg class="ic16" viewBox="0 0 16 16"><path d="M8 15V2M3 7l5-5 5 5" fill="none" stroke="#5e5e5e" stroke-width="1.500"/></svg><svg class="ic16"><use href="#search"/></svg><svg class="ic16" viewBox="0 0 16 16"><rect x="3" y="2" width="11" height="12" rx="2" fill="none" stroke="#999" stroke-width="1.500"/><path d="M8 6v5M6 9h5" stroke="#999" stroke-width="2"/></svg><svg class="ic16" viewBox="0 0 16 16"><circle cx="8" cy="8" r="6.500" fill="none" stroke="#999" stroke-width="1.500"/><circle cx="8" cy="8" r="2" fill="none" stroke="#999" stroke-width="1.500"/></svg><svg class="ic16"><use href="#plusbox"/></svg></div></div>
      <div class="attr">
        <div class="attr-title"><svg><use href="#poly"/></svg><span>PolyCircle</span></div>
        <h2>Tool</h2>
        <form class="form">
          <div class="row"><label for="mode">Mode</label><select id="mode" class="w-mode"><option>Normal</option></select></div>
          <div class="row axes"><label>X: <input type="checkbox" checked></label><label>Y: <input type="checkbox" checked></label><label>Z: <input type="checkbox" checked></label></div>
          <div class="row"><label class="dots" for="face"><span>Face</span></label><input type="checkbox" id="face"></div>
          <div class="row"><label class="dots" for="equal"><span>Equal interval</span></label><input type="checkbox" id="equal"></div>
          <div class="row tall"><label class="dots" for="dir"><span>Direction</span></label><input class="num w-attr" id="dir" value="10 °"></div>
          <div class="row tall"><label class="dots" for="radius"><span>Radius:</span></label><input class="num w-attr" id="radius" value="100 cm"></div>
          <button type="button" class="btn set">Set Circle</button>
        </form>
      </div>
    </section>
    <nav class="tabs"><button class="active">属性</button><button>层</button><button>构造</button></nav>
    <svg class="badge" viewBox="0 0 50 50"><circle cx="25" cy="25" r="24.500" fill="#2487f5"/><circle cx="25" cy="25" r="22.500" fill="#fff"/><circle cx="25" cy="25" r="20.500" fill="#fff" stroke="#222" stroke-width="1.500"/><path d="M22 22q3-2 6 0 2 4 0 8-3 4-6 0-2-4 0-8z" fill="#111" stroke="#111"/><path d="M23 22q-8-1-8-9M18 19q-5 0-5-4M19 19v-6M27 22q8-1 8-9M32 19q5 0 5-4M31 19v-6" fill="none" stroke="#111" stroke-width="1.500"/><text x="25" y="40">什么名</text></svg>
  </div>
</aside>
</div>
</body>
</html>
```
FILE: styles.css
```css
* { box-sizing: border-box; }
:root {
  --bg: #3d3d3d;
  --line: #4c4c4c;
  --btn: #595959;
  --on: #86a2d0;
  --hot: #d9d98a;
  --text: #cfcfcf;
}
body {
  margin: 0;
  height: 100vh;
  display: flex;
  flex-direction: column;
  background: var(--bg);
  color: var(--text);
  font: 11px/16px "Noto Sans", "Noto Sans CJK SC", sans-serif;
  overflow: hidden;
}
button, input, select { font: inherit; color: inherit; margin: 0; }
button { border: 0; padding: 0; background: none; white-space: nowrap; }
svg { display: block; overflow: visible; }
.sprite { position: absolute; width: 0; height: 0; }
.ic16 { width: 16px; height: 16px; color: #999; flex: none; }

/* Title bar */
.titlebar { flex: none; height: 23px; background: #fff; color: #000; display: flex; align-items: center; padding: 0 4px 2px 3px; }
.app-logo { width: 15px; height: 16px; }
.titlebar h1 { margin: 0 auto 0 5px; font-size: 12px; font-weight: 400; }
.win-buttons { display: flex; }
.win-buttons button { width: 45px; height: 20px; display: grid; place-items: center; }
.win-buttons svg { width: 12px; height: 12px; }

/* Menus */
.menubar { flex: none; height: 27px; padding: 0 3px 7px 8px; display: flex; align-items: center; justify-content: space-between; }
.menu { display: flex; gap: 14px; }
.hot { color: var(--hot); }
.menubar-right { display: flex; align-items: center; gap: 6px; }
.menubar-right label { margin-right: 4px; }
.menubar-right .layout-label { margin: 0 0 0 22px; }

select {
  appearance: none;
  height: 18px;
  padding: 0 16px 0 6px;
  border: 0;
  border-radius: 3px;
  background: var(--btn) url("data:image/svg+xml,%3Csvg xmlns='http://www.w3.org/2000/svg' width='8' height='6'%3E%3Cpath d='M1 1l3 3 3-3' fill='none' stroke='%23ddd' stroke-width='1.500'/%3E%3C/svg%3E") no-repeat right 4px center;
}
select:disabled { opacity: 1; color: #7a7a7a; background-color: #484848; background-image: url("data:image/svg+xml,%3Csvg xmlns='http://www.w3.org/2000/svg' width='8' height='6'%3E%3Cpath d='M1 1l3 3 3-3' fill='none' stroke='%23808080' stroke-width='1.500'/%3E%3C/svg%3E"); }
.w-node { width: 114px; }
.w-layout { width: 130px; }
.w-mode { width: 79px; }

.num {
  width: 100%;
  height: 18px;
  padding: 0 14px 0 3px;
  border: 1px solid #484848;
  border-radius: 3px 0 0 3px;
  background: #323232 url("data:image/svg+xml,%3Csvg xmlns='http://www.w3.org/2000/svg' width='8' height='12'%3E%3Cpath d='M1 4l3-3 3 3M1 8l3 3 3-3' fill='none' stroke='%23888'/%3E%3C/svg%3E") no-repeat right 0 center;
}
.num.w-frame { width: 75px; flex: none; }
.num.w-attr { width: 76px; height: 19px; padding-left: 5px; }
.btn { height: 18px; background: var(--btn); border-radius: 3px; }

/* Main frame */
.workspace { flex: 1; min-height: 0; display: flex; }
.main { flex: 1; min-width: 0; display: flex; flex-direction: column; }
.toolbar { flex: none; height: 39px; display: flex; align-items: flex-start; padding-top: 1px; }
.group { display: flex; gap: 2px; margin-left: 4px; background: #484848; border-radius: 3px; }
.group.sep { margin-left: 12px; }
.tool { width: 34px; height: 34px; background: var(--btn); border-radius: 2px; flex: none; }
.tool > svg { width: 34px; height: 34px; }
.tool.on, .tb.on { background: var(--on); }
.tool.hl { background: #d9d98a; }
.tool.pale { background: #dfdfb9; }
.tool.framed { box-shadow: inset 0 0 0 1px #d9d98a; }
.flip { transform: scaleX(-1); }
.psr { font: 900 12px Lato, sans-serif; fill: #ee6440; text-anchor: middle; }
.axis { font: 700 17px "Open Sans", sans-serif; fill: #181818; text-anchor: middle; }
.solo { font: 900 19px "DejaVu Sans", sans-serif; fill: #181818; text-anchor: middle; }
.grip { background: radial-gradient(circle, #777 0 1px, transparent 1px) 0 0 / 3px 3px; flex: none; }
.grip-v { width: 5px; height: 30px; margin-top: 2px; }
.grip-v.small { width: 5px; height: 18px; margin: 0; }
.grip-h { width: 24px; height: 5px; margin: 0 0 4px 2px; }

.stage { flex: 1; min-height: 0; display: flex; }
.sidebar { width: 39px; flex: none; padding-left: 1px; }
.vgroup { width: 34px; display: flex; flex-direction: column; gap: 2px; background: #484848; margin-bottom: 4px; }
.vgroup.far { margin-top: 12px; }
.center { flex: 1; min-width: 0; display: flex; flex-direction: column; }

.view { flex: 1; min-height: 0; display: flex; flex-direction: column; border: 1px solid var(--line); border-width: 1px 1px 0; margin-right: 3px; }
.panel-head { flex: none; height: 22px; padding: 0 3px 2px 6px; display: flex; align-items: center; gap: 10px; }
.burger { width: 14px; height: 10px; color: #8c8c8c; flex: none; }
.burger.light { color: #ddd; }
.head-icons { margin-left: auto; display: flex; gap: 4px; }
.view .head-icons { margin-right: -2px; }
.viewport { flex: 1; min-height: 0; position: relative; overflow: hidden; border: 1px solid #858585; }
.scene { width: 100%; height: 100%; }
.axlabel { font-size: 11px; text-anchor: middle; }
.hud { position: absolute; background: rgba(50, 50, 50, .5); border-radius: 3px; color: #e4e4e4; padding: 0 3px; }
.hud-name { left: 1px; top: 3px; }
.hud-stats { left: 1px; top: 29px; width: 94px; border-spacing: 0; line-height: 22px; }
.hud-stats th, .hud-stats td { padding: 0; font-weight: 400; text-align: left; white-space: nowrap; }
.hud-stats th { width: 19px; }
.hud-cam { left: 47%; top: 2px; display: flex; align-items: center; height: 18px; padding: 0 3px; background: rgba(60, 60, 60, .75); }
.hud-cam svg { width: 17px; height: 14px; overflow: hidden; }
.hud-tip { left: 56.400%; top: 15.800%; padding: 5px; background: rgba(80, 80, 80, .85); }
.hud-grid { right: 14px; bottom: 4px; }

/* Timeline */
.timeline { flex: none; height: 32px; display: flex; align-items: center; padding: 0 4px 0 1px; }
.ruler { flex: 1; position: relative; height: 32px; margin: 0 7px 0 4px; padding: 3px 5px 0; }
.labels { display: flex; justify-content: space-between; height: 18px; }
.labels span { width: 0; display: flex; justify-content: center; }
.labels .current { color: #7f9fdc; justify-content: flex-start; text-indent: 5px; }
.ruler::after { content: ""; position: absolute; left: 0; right: 0; top: 21px; height: 1px; background: #8a8a8a; }
.ticks {
  height: 6px;
  margin: 3px -1px 0 0;
  background:
    repeating-linear-gradient(90deg, #c4c4c4 0 1px, transparent 1px calc((100% - 1px) / 18)) 0 0 / 100% 3px no-repeat,
    repeating-linear-gradient(90deg, #b4b4b4 0 1px, transparent 1px calc((100% - 1px) / 90)) 0 0 / 100% 2px no-repeat;
}
.marks { position: absolute; left: 5px; right: 4px; top: 5px; display: flex; justify-content: space-between; }
.marks i { width: 1px; height: 22px; background: #8a8a8a; }
.playhead { position: absolute; left: 50%; top: 4px; width: 9px; height: 17px; margin-left: -5px; background: var(--on); }
.playhead::after { content: ""; position: absolute; left: 4px; top: 17px; width: 1px; height: 5px; background: #b9c8e2; }
.timeline .num { margin-bottom: 2px; }

.transport { flex: none; height: 26px; display: flex; align-items: center; padding: 0 4px 0 1px; }
.transport .w-frame { margin-left: 3px; }
.range { flex: 1; height: 18px; margin: 0 5px 0 7px; padding: 0 5px; background: var(--btn); border-radius: 2px; display: flex; align-items: center; gap: 6px; }
.range i { width: 4px; height: 10px; border: 1px solid #8a8a8a; border-width: 0 1px; }
.range .end { margin-left: auto; }
.tgroup { display: flex; gap: 2px; margin-left: 12px; background: #484848; border-radius: 2px; }
.tgroup.t1 { margin-left: 11px; }
.tgroup.t3 { margin-left: 4px; }
.tb { width: 26px; height: 26px; background: var(--btn); border-radius: 2px; flex: none; }
.tb > svg { width: 26px; height: 26px; }

/* Lower panels */
.lower { flex: none; height: 132px; margin: 4px 3px 3px 0; display: flex; gap: 3px; }
.lower section { border: 1px solid var(--line); }
.materials { flex: 1; }
.coords { width: 332px; }
.panel-head.short { border-bottom: 1px solid var(--line); height: 23px; }
.coords .panel-head { padding-left: 5px; }
.coord-titles { flex: 1; margin-left: -2px; display: grid; grid-template-columns: 102px 102px 1fr; }
.coord-grid { padding: 7px 4px 0 3px; display: grid; grid-template-columns: 12px 94px 12px 94px 12px 94px; row-gap: 4px; justify-content: space-between; }
.coord-grid select, .coord-grid .btn { margin-top: 2px; }
.coord-grid label { line-height: 18px; }
.c2 { grid-column: 2; }
.c4 { grid-column: 4; }
.c6 { grid-column: 6; }
.status { flex: none; height: 24px; margin-right: 3px; padding: 6px 4px; border: 1px solid var(--line); }

/* Right docks */
.right { width: 516px; flex: none; display: flex; flex-direction: column; }
.dock { display: flex; position: relative; min-height: 0; }
.objects-dock { flex: 451 1 0; }
.attr-dock { flex: 536 1 0; margin-top: 3px; }
.panel { flex: 1; min-width: 0; border: 1px solid var(--line); border-right: 0; display: flex; flex-direction: column; }
.tree { flex: 1; display: flex; flex-direction: column; border-top: 1px solid var(--line); margin-top: 1px; border-right: 2px solid var(--line); margin-right: 2px; }
.tree-row, .tree-body { display: grid; grid-template-columns: 62px 40px 1fr; }
.tree-row { height: 22px; background: #474747; align-items: center; }
.tree-name { display: flex; align-items: center; gap: 3px; color: #ffc02e; }
.branch { width: 9px; height: 11px; margin: -5px -2px 0 6px; border: 1px solid #777; border-width: 0 0 1px 1px; flex: none; }
.tree-name span { white-space: nowrap; }
.tree-flags svg { width: 24px; height: 14px; margin-left: 4px; }
.tree-tags svg { width: 36px; height: 18px; margin-left: 2px; }
.tree-body { flex: 1; }
.tree-body div + div { border-left: 1px solid var(--line); }
.tree-body div:last-child { border-left-width: 2px; }
.tabs { width: 22px; flex: none; background: #323232; display: flex; flex-direction: column; align-items: flex-start; }
.tabs button { writing-mode: vertical-rl; text-orientation: sideways; width: 21px; padding: 6px 0; color: #858585; line-height: 20px; }
.tabs .active { background: var(--bg); border: 1px solid var(--line); border-left: 0; color: #ddd; border-radius: 0 3px 3px 0; }
.attr { padding: 3px 4px; }
.attr-title { display: flex; align-items: center; gap: 4px; height: 20px; }
.attr-title svg { width: 20px; height: 20px; }
.attr h2 { margin: 10px 0 3px; font-size: 11px; line-height: 16px; color: #fff; }
.form { padding-left: 22px; }
.row { display: flex; align-items: center; height: 20px; }
.row.tall { height: 22px; }
.row select { margin-left: 8px; }
.axes label { width: 67px; display: flex; align-items: center; gap: 5px; }
.dots { width: 76px; display: flex; align-items: center; white-space: nowrap; }
.dots::after { content: ""; flex: 1; height: 1px; margin: 8px 5px 0 3px; background: repeating-linear-gradient(90deg, #999 0 2px, transparent 2px 7px); }
input[type="checkbox"] { appearance: none; width: 13px; height: 13px; border: 1px solid #999; border-radius: 2px; display: grid; place-items: center; }
input[type="checkbox"]:checked { background: #b5b5b5; border-color: #b5b5b5; }
input[type="checkbox"]:checked::before { content: ""; width: 8px; height: 4px; border: solid #151515; border-width: 0 0 2px 2px; transform: translateY(-1px) rotate(-45deg); }
.set { width: 72px; margin: 1px 0 0 -11px; }
.badge { position: absolute; width: 50px; height: 50px; right: 40px; top: -35px; }
.badge text { font: 700 7px "Noto Sans CJK SC", sans-serif; text-anchor: middle; fill: #111; }
```
